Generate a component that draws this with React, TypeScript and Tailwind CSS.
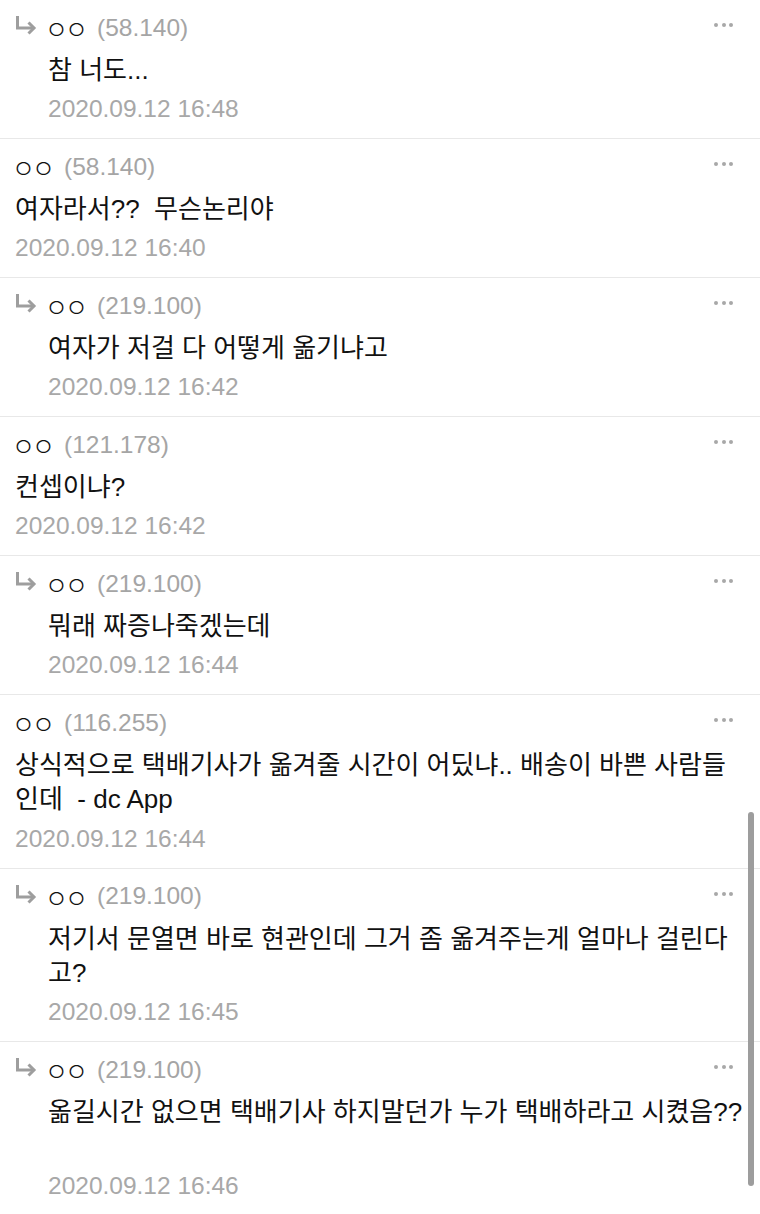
import React from "react";

type Comment = {
  reply: boolean;
  ip: string;
  lines: string[];
  time: string;
};

const comments: Comment[] = [
  { reply: true, ip: "(58.140)", lines: ["참 너도..."], time: "2020.09.12 16:48" },
  { reply: false, ip: "(58.140)", lines: ["여자라서??  무슨논리야"], time: "2020.09.12 16:40" },
  { reply: true, ip: "(219.100)", lines: ["여자가 저걸 다 어떻게 옮기냐고"], time: "2020.09.12 16:42" },
  { reply: false, ip: "(121.178)", lines: ["컨셉이냐?"], time: "2020.09.12 16:42" },
  { reply: true, ip: "(219.100)", lines: ["뭐래 짜증나죽겠는데"], time: "2020.09.12 16:44" },
  {
    reply: false,
    ip: "(116.255)",
    lines: ["상식적으로 택배기사가 옮겨줄 시간이 어딨냐.. 배송이 바쁜 사람들", "인데  - dc App"],
    time: "2020.09.12 16:44",
  },
  {
    reply: true,
    ip: "(219.100)",
    lines: ["저기서 문열면 바로 현관인데 그거 좀 옮겨주는게 얼마나 걸린다", "고?"],
    time: "2020.09.12 16:45",
  },
  {
    reply: true,
    ip: "(219.100)",
    lines: ["옮길시간 없으면 택배기사 하지말던가 누가 택배하라고 시켰음??", ""],
    time: "2020.09.12 16:46",
  },
];

const font = { fontFamily: '"Liberation Sans", "Noto Sans CJK KR", sans-serif' };

function ReplyArrow() {
  return (
    <svg width="24" height="22" viewBox="0 0 24 22" className="absolute left-[14px] top-[15px] w-[24px] h-[22px]">
      <path d="M3.5 1 V13 H20" fill="none" stroke="#9e9e9e" strokeWidth="3" />
      <path d="M14.5 7.5 L20 13 L14.5 18.5" fill="none" stroke="#9e9e9e" strokeWidth="3" />
    </svg>
  );
}

function MoreDots() {
  return (
    <div className="flex items-center gap-[3.5px] mr-[27px] mb-[6px]">
      <span className="w-[4px] h-[4px] rounded-full bg-[#a8a8a8]" />
      <span className="w-[4px] h-[4px] rounded-full bg-[#a8a8a8]" />
      <span className="w-[4px] h-[4px] rounded-full bg-[#a8a8a8]" />
    </div>
  );
}

function CommentRow({ c }: { c: Comment }) {
  return (
    <div>
      <div className={`relative pt-[12px] pb-[13px] ${c.reply ? "pl-[48px]" : "pl-[15px]"}`}>
        {c.reply && <ReplyArrow />}

        {/* header */}
        <div className="flex items-center justify-between h-[32px]">
          <div className="flex items-center">
            <span
              className="text-[25px] leading-[32px] tracking-[-3px] font-light text-[#111] -ml-[3px]"
              style={{ fontFamily: '"Noto Sans CJK KR", sans-serif' }}
            >
              ㅇㅇ
            </span>
            <span className="ml-[12px] text-[24.5px] text-[#a5a5a5]">{c.ip}</span>
          </div>
          <MoreDots />
        </div>

        {/* body */}
        <div className="mt-[10px] text-[26px] leading-[33px] text-[#111]">
          {c.lines.map((l, i) => (
            <div key={i} className={`whitespace-pre ${i === 0 ? "h-[33px]" : "h-[34.5px] pt-[1px]"}`}>
              {l}
            </div>
          ))}
        </div>

        {/* time */}
        <div className="mt-[6px] h-[32px] leading-[32px] text-[24.5px] text-[#a8a8a8]">{c.time}</div>
      </div>
      <div className="h-px bg-[#e8e8e8]" />
    </div>
  );
}

export default function App() {
  return (
    <div className="relative w-[760px] h-[1214px] bg-white overflow-hidden" style={font}>
      {comments.map((c, i) => (
        <CommentRow key={i} c={c} />
      ))}

      {/* scrollbar */}
      <div className="absolute right-[6px] top-[812px] w-[6px] h-[374px] rounded-full bg-[#9d9d9d]" />
    </div>
  );
}
